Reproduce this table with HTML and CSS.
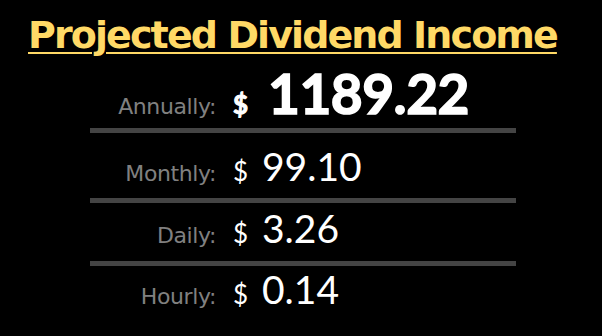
FILE: index.html
```html
<!DOCTYPE html>
<html>
<head>
<meta charset="utf-8">
<link rel="stylesheet" href="styles.css">
</head>
<body>
<div class="page">
  <h1 class="title">Projected Dividend Income</h1>
  <div class="rows">
    <div class="row row-1">
      <span class="label">Annually:</span>
      <span class="cur cur-bold">$</span>
      <span class="amount amount-big">1189.22</span>
    </div>
    <div class="row row-2">
      <span class="label">Monthly:</span>
      <span class="cur">$</span>
      <span class="amount">99.10</span>
    </div>
    <div class="row row-3">
      <span class="label">Daily:</span>
      <span class="cur">$</span>
      <span class="amount">3.26</span>
    </div>
    <div class="row row-4">
      <span class="label">Hourly:</span>
      <span class="cur">$</span>
      <span class="amount">0.14</span>
    </div>
  </div>
</div>
</body>
</html>
```
FILE: styles.css
```css
html, body {
  margin: 0;
  padding: 0;
  background: #000;
}
body {
  width: 602px;
  height: 336px;
  overflow: hidden;
  font-family: "DejaVu Sans", sans-serif;
}
.page {
  display: flex;
  flex-direction: column;
}
.title {
  margin: 0;
  padding: 14px 0 0 28px;
  height: 42px;
  font-size: 38px;
  line-height: 42px;
  font-weight: bold;
  color: #ffd966;
  text-decoration: underline;
  text-decoration-thickness: 2px;
  text-underline-offset: 4px;
  letter-spacing: -1.9px;
  white-space: nowrap;
}
.rows {
  margin-left: 90px;
  width: 426px;
  display: flex;
  flex-direction: column;
}
.row {
  box-sizing: border-box;
  display: flex;
  align-items: baseline;
  border-bottom: 5px solid #444;
  line-height: 1;
}
.row-1 { height: 77px; padding-top: 10px; }
.row-2 { height: 70px; padding-top: 14px; }
.row-3 { height: 63px; padding-top: 6px; }
.row-4 { height: 70px; padding-top: 4px; border-bottom: none; }
.label {
  width: 126px;
  text-align: right;
  color: #808080;
  font-size: 22px;
  letter-spacing: -0.4px;
}
.cur {
  margin-left: 17px;
  width: 29px;
  color: #fff;
  font-family: "Lato", sans-serif;
  font-size: 26px;
}
.cur-bold {
  font-weight: bold;
  width: 35px;
  -webkit-text-stroke: 1px #fff;
}
.amount {
  color: #fff;
  font-family: "Lato", sans-serif;
  font-size: 39px;
}
.amount-big {
  font-size: 55px;
  font-weight: bold;
  letter-spacing: -0.5px;
  -webkit-text-stroke: 1.5px #fff;
}
```
